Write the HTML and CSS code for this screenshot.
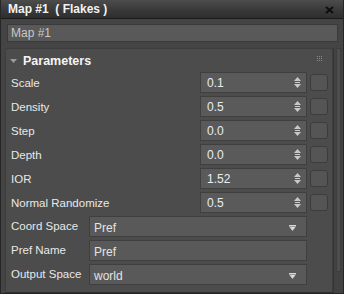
FILE: index.html
```html
<!DOCTYPE html>
<html>
<head>
<meta charset="utf-8">
<link rel="stylesheet" href="styles.css">
</head>
<body>
<div class="window">
  <div class="titlebar">
    <span class="title">Map #1&nbsp;&nbsp;( Flakes )</span>
    <svg class="close" width="9" height="8" viewBox="0 0 9 8"><path d="M1 1 L8 7 M8 1 L1 7" stroke="#0e0e0e" stroke-width="2"/></svg>
  </div>
  <div class="namerow"><div class="namefield">Map #1</div></div>
  <div class="main">
    <div class="panel">
      <div class="header">
        <svg class="tri" width="7" height="4" viewBox="0 0 7 4"><path d="M0 0 H7 L3.5 4 Z" fill="#9a9a9a"/></svg>
        <span class="htitle">Parameters</span>
        <svg class="grip" width="6" height="6" viewBox="0 0 6 6"><g fill="#8a8a8a"><rect x="0" y="0" width="1" height="1"/><rect x="2" y="0" width="1" height="1"/><rect x="4" y="0" width="1" height="1"/><rect x="0" y="2" width="1" height="1"/><rect x="2" y="2" width="1" height="1"/><rect x="4" y="2" width="1" height="1"/><rect x="0" y="4" width="1" height="1"/><rect x="2" y="4" width="1" height="1"/><rect x="4" y="4" width="1" height="1"/></g></svg>
      </div>
      <div class="rows">
        <div class="row"><span class="label">Scale</span><div class="num"><span>0.1</span><svg class="spin" width="7" height="11" viewBox="0 0 7 11"><path d="M3.5 0 L7 4 H0 Z M0 7 H7 L3.5 11 Z" fill="#c8c8c8"/><rect x="1" y="5" width="5" height="1" fill="#c8c8c8"/></svg></div><div class="chk"></div></div>
        <div class="row"><span class="label">Density</span><div class="num"><span>0.5</span><svg class="spin" width="7" height="11" viewBox="0 0 7 11"><path d="M3.5 0 L7 4 H0 Z M0 7 H7 L3.5 11 Z" fill="#c8c8c8"/><rect x="1" y="5" width="5" height="1" fill="#c8c8c8"/></svg></div><div class="chk"></div></div>
        <div class="row"><span class="label">Step</span><div class="num"><span>0.0</span><svg class="spin" width="7" height="11" viewBox="0 0 7 11"><path d="M3.5 0 L7 4 H0 Z M0 7 H7 L3.5 11 Z" fill="#c8c8c8"/><rect x="1" y="5" width="5" height="1" fill="#c8c8c8"/></svg></div><div class="chk"></div></div>
        <div class="row"><span class="label">Depth</span><div class="num"><span>0.0</span><svg class="spin" width="7" height="11" viewBox="0 0 7 11"><path d="M3.5 0 L7 4 H0 Z M0 7 H7 L3.5 11 Z" fill="#c8c8c8"/><rect x="1" y="5" width="5" height="1" fill="#c8c8c8"/></svg></div><div class="chk"></div></div>
        <div class="row"><span class="label">IOR</span><div class="num"><span>1.52</span><svg class="spin" width="7" height="11" viewBox="0 0 7 11"><path d="M3.5 0 L7 4 H0 Z M0 7 H7 L3.5 11 Z" fill="#c8c8c8"/><rect x="1" y="5" width="5" height="1" fill="#c8c8c8"/></svg></div><div class="chk"></div></div>
        <div class="row"><span class="label">Normal Randomize</span><div class="num"><span>0.5</span><svg class="spin" width="7" height="11" viewBox="0 0 7 11"><path d="M3.5 0 L7 4 H0 Z M0 7 H7 L3.5 11 Z" fill="#c8c8c8"/><rect x="1" y="5" width="5" height="1" fill="#c8c8c8"/></svg></div><div class="chk"></div></div>
        <div class="row row2"><span class="label2">Coord Space</span><div class="wide"><span>Pref</span><svg class="drop" width="7" height="6" viewBox="0 0 7 6"><rect x="0" y="0" width="7" height="1.5" fill="#d8d8d8"/><path d="M0.5 2 H6.5 L3.5 6 Z" fill="#d8d8d8"/></svg></div></div>
        <div class="row row2"><span class="label2">Pref Name</span><div class="wide"><span>Pref</span></div></div>
        <div class="row row2"><span class="label2">Output Space</span><div class="wide"><span>world</span><svg class="drop" width="7" height="6" viewBox="0 0 7 6"><rect x="0" y="0" width="7" height="1.5" fill="#d8d8d8"/><path d="M0.5 2 H6.5 L3.5 6 Z" fill="#d8d8d8"/></svg></div></div>
      </div>
    </div>
    <div class="scroll"><div class="thumb"></div></div>
  </div>
</div>
</body>
</html>
```
FILE: styles.css
```css
html, body {
  margin: 0;
  padding: 0;
  background: #444444;
}
.window {
  width: 344px;
  height: 294px;
  box-sizing: border-box;
  border: 1px solid #262626;
  border-top: none;
  background: #444444;
  display: flex;
  flex-direction: column;
  font-family: "Liberation Sans", Arial, sans-serif;
  font-size: 11.5px;
  color: #e8e8e8;
  overflow: hidden;
}
.titlebar {
  height: 19px;
  flex: none;
  box-sizing: border-box;
  background: linear-gradient(#4c4c4c, #383838 60%, #2f2f2f);
  border-bottom: 1px solid #1a1a1a;
  display: flex;
  align-items: center;
  padding: 0 9px 0 7px;
}
.title {
  font-weight: bold;
  font-size: 12px;
  color: #f2f2f2;
  flex: 1;
}
.close {
  display: block;
  margin-top: 1px;
}
.namerow {
  padding: 5px 5px 0 6px;
  flex: none;
}
.namefield {
  height: 18px;
  box-sizing: border-box;
  background: #595959;
  border: 1px solid #3a3a3a;
  color: #c8c8c8;
  padding: 0 3px;
  line-height: 16px;
  font-size: 12px;
}
.main {
  flex: 1;
  display: flex;
  margin-top: 6px;
  padding-left: 4px;
  min-height: 0;
}
.panel {
  width: 330px;
  box-sizing: border-box;
  background: #4c4c4c;
  border: 1px solid #3d3d3d;
  border-radius: 3px 3px 0 0;
  border-bottom: 1px solid #2e2e2e;
  padding: 0 0 0 5px;
}
.header {
  height: 23px;
  display: flex;
  align-items: center;
  position: relative;
}
.tri {
  margin-left: -1px;
  margin-right: 6px;
}
.htitle {
  font-weight: bold;
  color: #f4f4f4;
  font-size: 12.5px;
}
.grip {
  position: absolute;
  right: 9px;
  top: 7px;
}
.rows {
  display: flex;
  flex-direction: column;
  gap: 3px;
}
.row {
  height: 21px;
  display: flex;
  align-items: center;
}
.label {
  width: 189px;
}
.label2 {
  width: 78px;
  margin-top: -2px;
}
.num {
  width: 107px;
  height: 21px;
  box-sizing: border-box;
  background: #5a5a5a;
  border: 1px solid #3f3f3f;
  display: flex;
  align-items: center;
  justify-content: space-between;
  padding: 0 5px 0 6px;
  color: #e8ecf4;
  font-size: 12px;
}
.chk {
  width: 18px;
  height: 17px;
  box-sizing: border-box;
  margin-left: 3px;
  background: #555555;
  border: 1px solid #3c3c3c;
  border-radius: 3px;
}
.wide {
  width: 218px;
  height: 21px;
  box-sizing: border-box;
  background: #595959;
  border: 1px solid #3f3f3f;
  display: flex;
  align-items: center;
  justify-content: space-between;
  padding: 2px 10px 0 4px;
  color: #e4e4e4;
  font-size: 12px;
}
.scroll {
  width: 10px;
  box-sizing: border-box;
  border-left: 1px solid #363636;
  padding-left: 2px;
  background: #424242;
}
.thumb {
  width: 5px;
  height: 224px;
  background: #4e4e4e;
  border: 1px solid #3e3e3e;
  box-sizing: border-box;
}
```
